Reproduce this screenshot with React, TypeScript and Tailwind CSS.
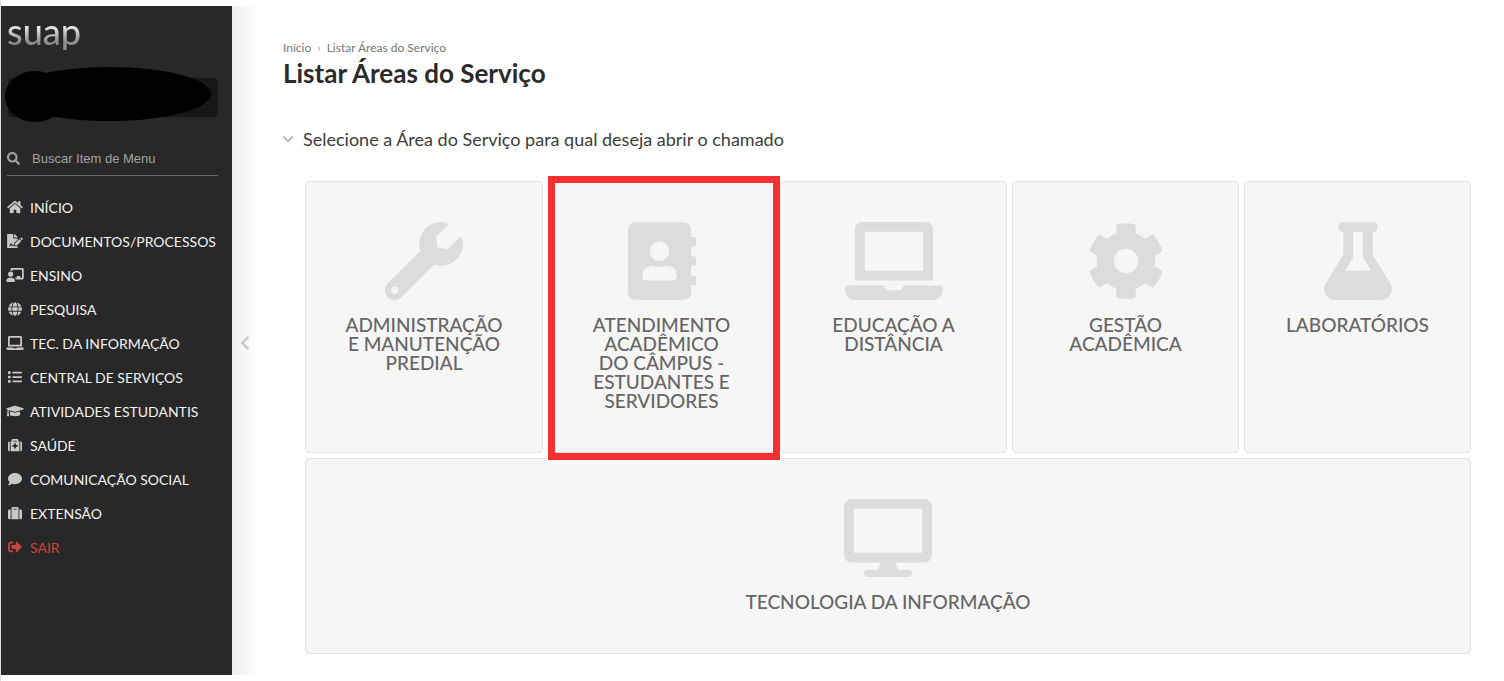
import {
  FaAddressBook,
  FaChalkboardTeacher,
  FaCog,
  FaComment,
  FaDesktop,
  FaFileSignature,
  FaFlask,
  FaGlobe,
  FaGraduationCap,
  FaHome,
  FaLaptop,
  FaList,
  FaMedkit,
  FaSearch,
  FaSignOutAlt,
  FaSuitcase,
  FaWrench,
} from "react-icons/fa";
import { ChevronDown, ChevronLeft } from "lucide-react";
import type { IconType } from "react-icons";

interface MenuItem {
  label: string;
  icon: IconType;
  iconWidth: string;
  danger?: boolean;
}

interface ServiceArea {
  label: string;
  icon: IconType;
  iconWidth: string;
  highlighted?: boolean;
  wide?: boolean;
}

const menuItems: MenuItem[] = [
  { label: "INÍCIO", icon: FaHome, iconWidth: "w-4" },
  { label: "DOCUMENTOS/PROCESSOS", icon: FaFileSignature, iconWidth: "w-4" },
  { label: "ENSINO", icon: FaChalkboardTeacher, iconWidth: "w-[18px]" },
  { label: "PESQUISA", icon: FaGlobe, iconWidth: "w-[14px]" },
  { label: "TEC. DA INFORMAÇÃO", icon: FaLaptop, iconWidth: "w-[18px]" },
  { label: "CENTRAL DE SERVIÇOS", icon: FaList, iconWidth: "w-[14px]" },
  { label: "ATIVIDADES ESTUDANTIS", icon: FaGraduationCap, iconWidth: "w-[18px]" },
  { label: "SAÚDE", icon: FaMedkit, iconWidth: "w-[14px]" },
  { label: "COMUNICAÇÃO SOCIAL", icon: FaComment, iconWidth: "w-[14px]" },
  { label: "EXTENSÃO", icon: FaSuitcase, iconWidth: "w-[14px]" },
  { label: "SAIR", icon: FaSignOutAlt, iconWidth: "w-[14px]", danger: true },
];

const areas: ServiceArea[] = [
  {
    label: "ADMINISTRAÇÃO E MANUTENÇÃO PREDIAL",
    icon: FaWrench,
    iconWidth: "w-[78px]",
  },
  {
    // "DO" stays on the same line as "CÂMPUS"
    label: "ATENDIMENTO ACADÊMICO DO\u00a0CÂMPUS - ESTUDANTES E SERVIDORES",
    icon: FaAddressBook,
    iconWidth: "w-[68px]",
    highlighted: true,
  },
  { label: "EDUCAÇÃO A DISTÂNCIA", icon: FaLaptop, iconWidth: "w-[98px]" },
  { label: "GESTÃO ACADÊMICA", icon: FaCog, iconWidth: "w-[78px]" },
  { label: "LABORATÓRIOS", icon: FaFlask, iconWidth: "w-[68px]" },
  {
    label: "TECNOLOGIA DA INFORMAÇÃO",
    icon: FaDesktop,
    iconWidth: "w-[88px]",
    wide: true,
  },
];

function Sidebar() {
  return (
    <aside className="w-[231px] shrink-0 bg-[#282828] pt-[6px]">
      <a
        href="#"
        className="ml-[6px] block w-fit bg-gradient-to-b from-white from-30% to-[#8c8c8c] to-80% bg-clip-text text-[36px] leading-[38px] font-medium text-transparent"
      >
        suap
      </a>

      {/* Hidden user box */}
      <div className="relative mt-7 mr-[14px] ml-[7px] h-[39px] rounded bg-[#171717]">
        <div className="absolute -top-[11px] right-[7px] left-0 h-[54px] rounded-[50%] bg-black" />
        <div className="absolute -top-[7px] -left-[3px] h-[51px] w-[60px] rounded-[50%] bg-black" />
      </div>

      <label className="mt-[25px] mr-[14px] ml-[6px] flex h-[34px] items-center gap-3 border-b border-[#6a6a6a] text-[#a3a3a3]">
        <FaSearch className="size-[13px] shrink-0" />
        <input
          type="text"
          placeholder="Buscar Item de Menu"
          aria-label="Buscar Item de Menu"
          className="w-full bg-transparent font-['Liberation_Sans',sans-serif] text-[13px] outline-none placeholder:text-[#a3a3a3]"
        />
      </label>

      <nav className="mt-[14px]">
        <ul>
          {menuItems.map(({ label, icon: Icon, iconWidth, danger }) => (
            <li key={label}>
              <a
                href="#"
                className={`flex h-[34px] items-center gap-[6px] pl-[5px] text-[14px] whitespace-nowrap ${
                  danger ? "text-[#d3423d]" : "text-[#f2f2f2]"
                }`}
              >
                <span
                  className={`flex w-[18px] justify-center ${
                    danger ? "text-[#c4443f]" : "text-[#c8c8c8]"
                  }`}
                >
                  <Icon className={`h-[14px] shrink-0 ${iconWidth}`} />
                </span>
                {label}
              </a>
            </li>
          ))}
        </ul>
      </nav>
    </aside>
  );
}

function AreaCard({
  label,
  icon: Icon,
  iconWidth,
  highlighted,
  wide,
}: ServiceArea) {
  return (
    <a
      href="#"
      className={`relative flex flex-col items-center rounded border border-[#e3e3e3] bg-[#f6f6f6] px-9 pt-10 pb-[42px] text-center text-[19px] leading-[19px] font-medium text-[#666] ${
        wide ? "col-span-5" : ""
      }`}
    >
      <Icon className={`mb-[15px] h-[78px] text-[#dcdcdc] ${iconWidth}`} />
      {label}
      {highlighted && (
        <span className="absolute -top-[6px] -right-[6px] -bottom-[8px] -left-px z-10 border-[7px] border-[#f53030]" />
      )}
    </a>
  );
}

export default function App() {
  return (
    <div className="flex min-h-screen border-l border-[#e0e0e0] bg-white py-[6px] font-[Lato,sans-serif]">
      <Sidebar />

      <div className="flex w-[26px] shrink-0 items-center justify-center bg-gradient-to-r from-[#efefef] to-white">
        <button type="button" aria-label="Recolher menu" className="mt-1 text-[#c4c4c4]">
          <ChevronLeft className="size-[22px]" strokeWidth={2.5} />
        </button>
      </div>

      <main className="min-w-0 flex-1 pt-[34px] pr-[33px] pl-[25px]">
        <nav className="flex gap-[6px] text-xs leading-4 text-[#777]">
          <a href="#">Início</a>
          <span className="text-[#aaa]">›</span>
          <a href="#">Listar Áreas do Serviço</a>
        </nav>
        <h1 className="mt-[3px] text-[26px] leading-[28px] font-bold text-[#2a2a2a]">
          Listar Áreas do Serviço
        </h1>

        <section className="mt-10">
          <h2 className="flex items-center gap-[6px] text-[18px] leading-6 text-[#3c3c3c]">
            <ChevronDown
              className="-ml-[4px] size-[18px] text-[#bbb]"
              strokeWidth={2.5}
            />
            Selecione a Área do Serviço para qual deseja abrir o chamado
          </h2>

          <div className="mt-[30px] ml-[22px] grid grid-cols-[238fr_227fr_227fr_227fr_227fr] gap-[5px]">
            {areas.map((area) => (
              <AreaCard key={area.label} {...area} />
            ))}
          </div>
        </section>
      </main>
    </div>
  );
}
